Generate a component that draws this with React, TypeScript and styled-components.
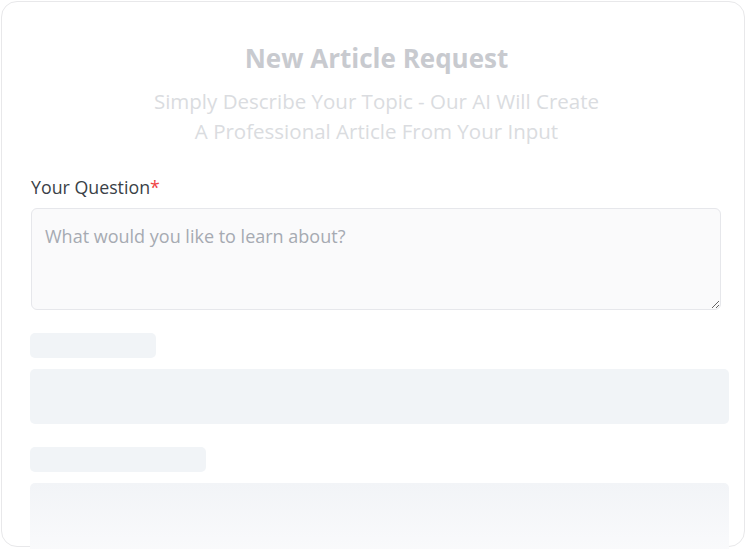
import React from "react";
import styled, { createGlobalStyle } from "styled-components";

const GlobalStyle = createGlobalStyle`
  html, body {
    margin: 0;
    padding: 0;
    background: #ffffff;
  }
  body {
    font-family: "Open Sans", "Noto Sans", sans-serif;
    overflow: hidden;
  }
`;

const Page = styled.div`
  width: 746px;
  height: 549px;
  padding: 1px 0 0 1px;
  box-sizing: border-box;
  overflow: hidden;
`;

const Card = styled.div`
  width: 744px;
  height: 546px;
  box-sizing: border-box;
  border: 1px solid #e8e8ea;
  border-radius: 16px;
  padding: 38px 15px 0 28px;
  display: flex;
  flex-direction: column;
  background: #ffffff;

  & > * {
    flex-shrink: 0;
  }
`;

const Header = styled.div`
  display: flex;
  flex-direction: column;
  align-items: center;
  padding-right: 6px;
  margin-bottom: 28px;
`;

const Title = styled.h1`
  margin: 0;
  font-size: 26px;
  line-height: 36px;
  font-weight: 700;
  color: #c8cacf;
`;

const Subtitle = styled.p`
  margin: 10px 0 0;
  font-size: 20.5px;
  line-height: 30px;
  font-weight: 400;
  color: #dadce0;
  text-align: center;
`;

const Label = styled.label`
  display: block;
  font-size: 17.8px;
  line-height: 26px;
  color: #3a3f47;
  padding-left: 1px;
  margin-bottom: 8px;
`;

const Required = styled.span`
  color: #ef4444;
`;

const TextArea = styled.textarea`
  display: block;
  width: 690px;
  height: 102px;
  margin-left: 1px;
  box-sizing: border-box;
  border: 1px solid #e6e7eb;
  border-radius: 6px;
  background: #fafafb;
  padding: 14px 13px;
  font-family: "Open Sans", "Noto Sans", sans-serif;
  font-size: 18px;
  line-height: 26px;
  color: #374151;
  outline: none;
  caret-color: #111827;

  &::placeholder {
    color: #a6aab2;
  }
`;

const SkeletonGroup = styled.div<{ $top: number }>`
  display: flex;
  flex-direction: column;
  gap: 11px;
  margin-top: ${(p) => p.$top}px;
`;

const Bar = styled.div<{ $w: number; $h: number; $fade?: boolean }>`
  width: ${(p) => p.$w}px;
  height: ${(p) => p.$h}px;
  flex-shrink: 0;
  border-radius: 5px;
  background: ${(p) =>
    p.$fade
      ? "linear-gradient(to bottom, #f2f4f7 0%, #f8f9fb 70%, #fbfbfc 100%)"
      : "#f1f4f7"};
`;

export default function App() {
  return (
    <>
      <GlobalStyle />
      <Page>
        <Card>
          <Header>
            <Title>New Article Request</Title>
            <Subtitle>
              Simply Describe Your Topic - Our AI Will Create
              <br />A Professional Article From Your Input
            </Subtitle>
          </Header>
          <Label htmlFor="question">
            Your Question<Required>*</Required>
          </Label>
          <TextArea
            id="question"
            autoFocus
            placeholder="What would you like to learn about?"
          />
          <SkeletonGroup $top={23}>
            <Bar $w={126} $h={25} />
            <Bar $w={699} $h={55} />
          </SkeletonGroup>
          <SkeletonGroup $top={23}>
            <Bar $w={176} $h={25} />
            <Bar $w={699} $h={80} $fade />
          </SkeletonGroup>
        </Card>
      </Page>
    </>
  );
}
